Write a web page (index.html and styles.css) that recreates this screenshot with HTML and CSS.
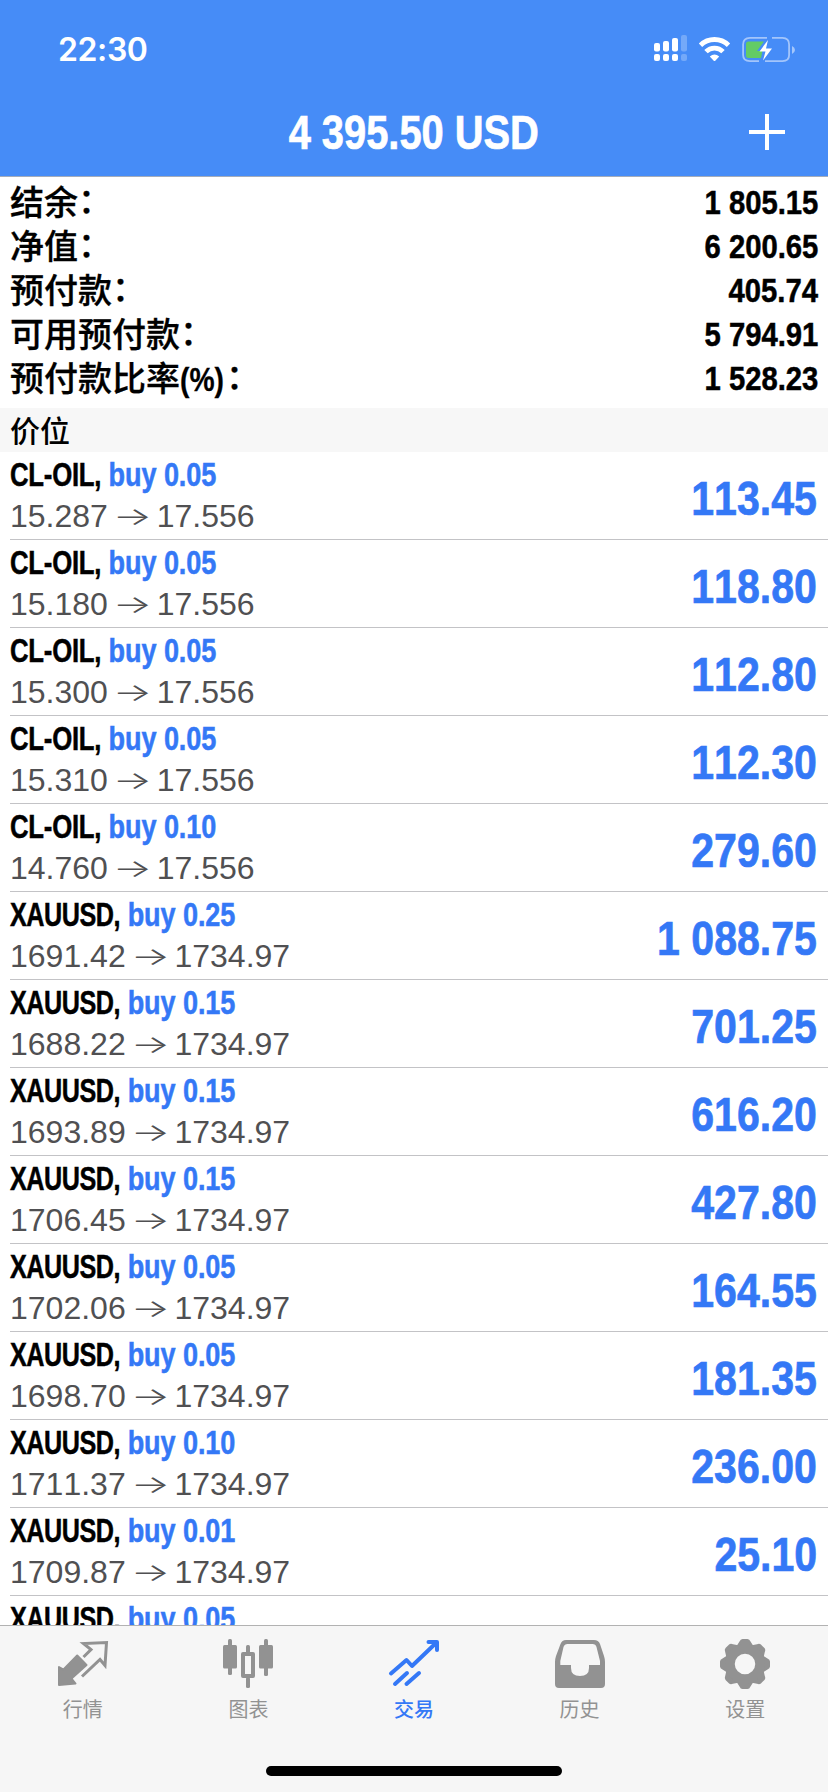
FILE: index.html
```html
<!DOCTYPE html>
<html lang="zh-CN">
<head>
<meta charset="utf-8">
<title>交易</title>
<link rel="stylesheet" href="styles.css">
</head>
<body>
<div class="app">
  <header class="header">
    <div class="status">
      <span class="clock">22:30</span>
      <svg class="status-icons" width="144" height="32" viewBox="650 32 144 32">
        <g fill="#fff">
          <rect x="653" y="43" width="6" height="8.500" rx="2"/><rect x="662" y="41" width="6" height="10.500" rx="2"/><rect x="671" y="38" width="6" height="13.500" rx="2"/>
          <rect x="653" y="54" width="6" height="7" rx="2"/><rect x="662" y="54" width="6" height="7" rx="2"/><rect x="671" y="54" width="6" height="7" rx="2"/>
        </g>
        <g fill="#fff" opacity=".25"><rect x="680" y="35" width="6" height="16.500" rx="2"/><rect x="680" y="54" width="6" height="7" rx="2"/></g>
        <g fill="none" stroke="#fff" stroke-width="4.800">
          <path d="M699.500 45.200A20 20 0 0 1 727.500 45.200"/>
          <path d="M705 51.600A12 12 0 0 1 722 51.600"/>
        </g>
        <path d="M708.800 56.500Q713.500 52.500 718.200 56.500L714.500 60.500Q713.500 61.500 712.500 60.500Z" fill="#fff"/>
        <g fill="none" stroke="#fff" stroke-width="1.800" opacity=".5">
          <path d="M766 37.900H749Q742.100 38 742.100 44.500V55Q742.100 61.100 749 61.100H758"/>
          <path d="M771 37.900H781.500Q788.100 38 788.100 44.500V55Q788.100 61.100 781.500 61.100H764"/>
        </g>
        <path d="M791 46Q794 47.500 794 50T791 54Z" fill="#fff" opacity=".5"/>
        <path d="M763 41.500L756 51H761.500L760 58H747.500Q745 58 745 55.500V44Q745 41.500 747.500 41.500Z" fill="#63cb66"/>
        <path d="M767 40L758.500 51.500H764.500L762 60.500L771 48.500H765Z" fill="#fff"/>
      </svg>
    </div>
    <div class="titlebar">
      <h1 class="title">4 395.50 USD</h1>
      <svg class="add" width="36" height="36" viewBox="0 0 36 36"><path d="M0 18H36M18 0V36" stroke="#fff" stroke-width="4"/></svg>
    </div>
  </header>

  <section class="summary">
    <div class="sum-row"><span>结余<i class="colon">：</i></span><b>1 805.15</b></div>
    <div class="sum-row"><span>净值<i class="colon">：</i></span><b>6 200.65</b></div>
    <div class="sum-row"><span>预付款<i class="colon">：</i></span><b>405.74</b></div>
    <div class="sum-row"><span>可用预付款<i class="colon">：</i></span><b>5 794.91</b></div>
    <div class="sum-row"><span>预付款比率<i class="pct">(%)</i><i class="colon">：</i></span><b>1 528.23</b></div>
  </section>
  <h2 class="section-title">价位</h2>

  <main class="positions">
    <div class="pos"><div><p class="deal oil"><b>CL-OIL,</b> <em>buy 0.05</em></p><p class="price">15.287 <i>→</i> 17.556</p></div><strong>113.45</strong></div>
    <div class="pos"><div><p class="deal oil"><b>CL-OIL,</b> <em>buy 0.05</em></p><p class="price">15.180 <i>→</i> 17.556</p></div><strong>118.80</strong></div>
    <div class="pos"><div><p class="deal oil"><b>CL-OIL,</b> <em>buy 0.05</em></p><p class="price">15.300 <i>→</i> 17.556</p></div><strong>112.80</strong></div>
    <div class="pos"><div><p class="deal oil"><b>CL-OIL,</b> <em>buy 0.05</em></p><p class="price">15.310 <i>→</i> 17.556</p></div><strong>112.30</strong></div>
    <div class="pos"><div><p class="deal oil"><b>CL-OIL,</b> <em>buy 0.10</em></p><p class="price">14.760 <i>→</i> 17.556</p></div><strong>279.60</strong></div>
    <div class="pos"><div><p class="deal"><b>XAUUSD,</b> <em>buy 0.25</em></p><p class="price">1691.42 <i>→</i> 1734.97</p></div><strong>1 088.75</strong></div>
    <div class="pos"><div><p class="deal"><b>XAUUSD,</b> <em>buy 0.15</em></p><p class="price">1688.22 <i>→</i> 1734.97</p></div><strong>701.25</strong></div>
    <div class="pos"><div><p class="deal"><b>XAUUSD,</b> <em>buy 0.15</em></p><p class="price">1693.89 <i>→</i> 1734.97</p></div><strong>616.20</strong></div>
    <div class="pos"><div><p class="deal"><b>XAUUSD,</b> <em>buy 0.15</em></p><p class="price">1706.45 <i>→</i> 1734.97</p></div><strong>427.80</strong></div>
    <div class="pos"><div><p class="deal"><b>XAUUSD,</b> <em>buy 0.05</em></p><p class="price">1702.06 <i>→</i> 1734.97</p></div><strong>164.55</strong></div>
    <div class="pos"><div><p class="deal"><b>XAUUSD,</b> <em>buy 0.05</em></p><p class="price">1698.70 <i>→</i> 1734.97</p></div><strong>181.35</strong></div>
    <div class="pos"><div><p class="deal"><b>XAUUSD,</b> <em>buy 0.10</em></p><p class="price">1711.37 <i>→</i> 1734.97</p></div><strong>236.00</strong></div>
    <div class="pos"><div><p class="deal"><b>XAUUSD,</b> <em>buy 0.01</em></p><p class="price">1709.87 <i>→</i> 1734.97</p></div><strong>25.10</strong></div>
    <div class="pos"><div><p class="deal"><b>XAUUSD,</b> <em>buy 0.05</em></p></div></div>
  </main>

  <footer class="footer">
    <nav class="tabs">
      <a class="tab">
        <svg width="52" height="52" viewBox="56 1638 52 52">
          <path d="M76.200 1655.500L85.500 1665L70.500 1678.500L74.500 1683.500L58 1685V1667L62.500 1669.500Z" fill="#929292" stroke="#929292" stroke-width="2" stroke-linejoin="round"/>
          <path d="M82.500 1657L90 1649.500L82.500 1643.500L105.500 1642.500L104 1665.500L99 1659.500L81 1676.500" fill="none" stroke="#929292" stroke-width="3"/>
        </svg>
        <span>行情</span>
      </a>
      <a class="tab">
        <svg width="52" height="52" viewBox="222 1638 52 52">
          <g fill="#929292"><rect x="223" y="1645" width="14" height="23.500" rx="1.500"/><rect x="228" y="1639" width="4" height="36" rx="1.500"/>
          <rect x="259" y="1645" width="14" height="23.500" rx="1.500"/><rect x="264" y="1639" width="4" height="37" rx="1.500"/>
          <rect x="246" y="1645" width="4" height="9" rx="1.500"/><rect x="246" y="1677" width="4" height="11" rx="1.500"/></g>
          <rect x="243" y="1654" width="10" height="22" fill="none" stroke="#929292" stroke-width="4" stroke-linejoin="round"/>
        </svg>
        <span>图表</span>
      </a>
      <a class="tab active">
        <svg width="52" height="52" viewBox="387 1638 52 52">
          <g fill="none" stroke="#3478f6" stroke-width="4" stroke-linecap="round" stroke-linejoin="round">
            <path d="M390 1673.500L405.500 1660L411 1666L435 1643"/><path d="M427.500 1642H436V1650"/>
            <path d="M394 1684L406 1673M405.500 1684L418 1673"/>
          </g>
        </svg>
        <span>交易</span>
      </a>
      <a class="tab">
        <svg width="52" height="52" viewBox="552 1638 52 52">
          <path fill-rule="evenodd" fill="#929292" d="M564 1640H592Q596.500 1640 598 1644L602 1656Q603 1659 603 1662V1684Q603 1688 599 1688H557Q553 1688 553 1684V1662Q553 1659 554 1656L558.500 1644Q560 1640 564 1640ZM565.500 1644Q562.500 1644 561.500 1647L558.300 1661V1665H569V1668Q569 1676 578 1676T587 1668V1665H598V1661L594.500 1647Q593.700 1644 590.500 1644Z"/>
        </svg>
        <span>历史</span>
      </a>
      <a class="tab">
        <svg width="52" height="52" viewBox="-26 -26 52 52">
          <defs><path id="tooth" d="M-9 -17L-5.500 -22.500Q-4.500 -25 -2.500 -25H2.500Q4.500 -25 5.500 -22.500L9 -17Z"/></defs>
          <g fill="#929292"><use href="#tooth"/><use href="#tooth" transform="rotate(45)"/><use href="#tooth" transform="rotate(90)"/><use href="#tooth" transform="rotate(135)"/><use href="#tooth" transform="rotate(180)"/><use href="#tooth" transform="rotate(225)"/><use href="#tooth" transform="rotate(270)"/><use href="#tooth" transform="rotate(315)"/></g>
          <circle r="15" fill="none" stroke="#929292" stroke-width="9.500"/>
        </svg>
        <span>设置</span>
      </a>
    </nav>
    <div class="home"></div>
  </footer>
</div>
</body>
</html>
```
FILE: styles.css
```css
* { box-sizing: border-box; margin: 0; padding: 0; }
body { background: #fff; font-family: "Liberation Sans", "Noto Sans CJK SC", sans-serif; font-kerning: none; color: #000; }
.app { width: 828px; height: 1792px; display: flex; flex-direction: column; overflow: hidden; }
i, em { font-style: normal; }

.header { height: 177px; background: #468cf7; border-bottom: 1px solid #a3acbb; color: #fff; flex: none; }
.status { height: 88px; padding: 32px 33px 0 58px; display: flex; justify-content: space-between; align-items: flex-start; }
.clock { font: 600 32px/36px Inter, sans-serif; letter-spacing: -.4px; }
.titlebar { height: 88px; display: grid; grid-template-columns: 1fr auto 1fr; align-items: center; padding: 2px 44px 0; }
.title { grid-column: 2; font-size: 48px; line-height: 80px; transform: scaleX(.83); white-space: nowrap; -webkit-text-stroke: .7px; }
.add { justify-self: end; margin: -2px -1px 0 0; }

.summary { height: 231px; padding: 2px 10px 0 10px; flex: none; }
.sum-row { height: 44px; line-height: 44px; font-size: 34px; display: flex; justify-content: space-between; }
.sum-row > span { font-family: "Noto Sans CJK SC", sans-serif; font-weight: 500; white-space: nowrap; -webkit-text-stroke: .3px; }
.sum-row b { line-height: 46px; transform: scaleX(.86); transform-origin: right; -webkit-text-stroke: .5px; }
.colon { display: inline-block; line-height: 36px; transform: translate(0, -2px); }
.pct { display: inline-block; font: bold 34px/40px "Liberation Sans", sans-serif; transform: scaleX(.83); transform-origin: left; margin-right: -7px; }
.section-title { height: 44px; flex: none; padding-left: 10px; background: #f7f7f7; font: 500 30px/42px "Noto Sans CJK SC", sans-serif; }

.positions { height: 1173px; flex: none; overflow: hidden; padding-left: 10px; }
.pos { height: 88px; border-bottom: 1px solid #c3c3c6; padding: 3px 11px 0 0; display: flex; justify-content: space-between; }
.deal { font-size: 33px; line-height: 40px; transform: scaleX(.82); transform-origin: left; white-space: nowrap; font-weight: bold; -webkit-text-stroke: .5px; }
.deal b { display: inline-block; letter-spacing: -.6px; transform: scaleX(.93); transform-origin: left; margin-right: -10px; }
.deal.oil b { letter-spacing: -.3px; transform: scaleX(.95); margin-right: -6px; }
.deal em { color: #3478f6; letter-spacing: -.1px; }
.price { font-size: 32px; line-height: 42px; color: #505052; white-space: nowrap; }
.price i { display: inline-flex; justify-content: center; width: 31px; font: 300 25px/30px Inter, sans-serif; transform: translateY(-2px) scaleX(1.65); }
.pos strong { font-size: 48px; line-height: 87px; color: #3478f6; transform: scaleX(.855); transform-origin: right; white-space: nowrap; -webkit-text-stroke: .7px; }

.footer { height: 167px; flex: none; background: #f6f6f6; border-top: 1px solid #b2b2b2; }
.tabs { display: grid; grid-template-columns: repeat(5, 1fr); height: 140px; }
.tab { display: flex; flex-direction: column; align-items: center; padding-top: 12px; color: #929292; }
.tab svg { display: block; }
.tab span { font: 400 20px/30px "Noto Sans CJK SC", sans-serif; margin-top: 4px; }
.tab.active { color: #3478f6; }
.tab.active span { font-weight: 500; }
.home { width: 296px; height: 10px; border-radius: 5px; background: #000; margin: 0 auto; }
```
